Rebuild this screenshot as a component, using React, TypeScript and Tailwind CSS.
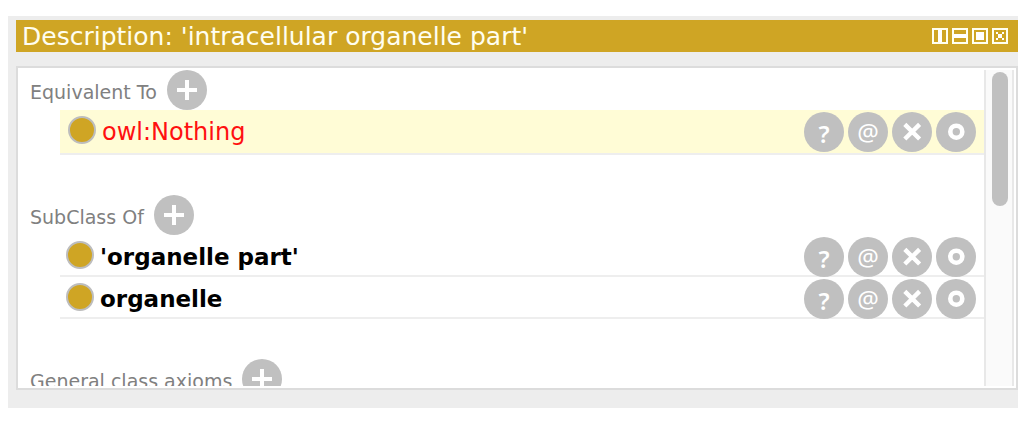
import type { ReactNode } from "react";

function RoundButton({ label, children }: { label: string; children: ReactNode }) {
  return (
    <button
      type="button"
      aria-label={label}
      className="flex size-10 shrink-0 items-center justify-center rounded-full bg-[#c0c0c0] text-white"
    >
      {children}
    </button>
  );
}

function SectionHeader({ title }: { title: string }) {
  return (
    <div className="flex h-10 items-center gap-2.5 pl-3">
      <h2 className="pt-1 text-[19px] leading-6 whitespace-nowrap text-[#808080]">{title}</h2>
      <RoundButton label={`Add ${title}`}>
        <svg viewBox="0 0 40 40" className="size-10" stroke="currentColor" strokeWidth="4">
          <path d="M10 20H30M20 10V30" />
        </svg>
      </RoundButton>
    </div>
  );
}

function RowActions() {
  return (
    <div className="flex gap-1 pr-2">
      <RoundButton label="Explain">
        <span className="pt-1 font-['Noto_Sans',sans-serif] text-2xl leading-6 font-semibold">?</span>
      </RoundButton>
      <RoundButton label="Annotate">
        <span className="font-['Noto_Sans',sans-serif] text-2xl leading-6">@</span>
      </RoundButton>
      <RoundButton label="Remove">
        <svg viewBox="0 0 40 40" className="size-10" stroke="currentColor" strokeWidth="4.4">
          <path d="M12.8 12.4L27.6 27M27.6 12.4L12.8 27" />
        </svg>
      </RoundButton>
      <RoundButton label="Edit">
        <svg viewBox="0 0 40 40" className="size-10" fill="none" stroke="currentColor" strokeWidth="4.6">
          <circle cx="20.3" cy="19.7" r="6" />
        </svg>
      </RoundButton>
    </div>
  );
}

function ClassDot() {
  return <span className="size-7 shrink-0 rounded-full border-2 border-[#bdbdbd] bg-[#cfa524]" />;
}

function InferredRow({ name }: { name: string }) {
  return (
    <li className="flex h-[45px] items-start justify-between bg-[#fffcd6] pt-0.5 pl-2 shadow-[inset_0_-2px_0_#eeeeee]">
      <div className="flex items-start gap-1.5 pt-1">
        <ClassDot />
        <span className="text-2xl leading-8 whitespace-nowrap text-[#ff1010]">{name}</span>
      </div>
      <RowActions />
    </li>
  );
}

function AssertedRow({ name }: { name: string }) {
  return (
    <li className="flex h-[42px] items-start justify-between pt-0.5 pl-1.5 shadow-[inset_0_-2px_0_#eeeeee]">
      <div className="flex items-start gap-1.5 pt-1">
        <ClassDot />
        <span className="text-[23px] leading-8 font-bold whitespace-nowrap text-black">{name}</span>
      </div>
      <RowActions />
    </li>
  );
}

const viewControls = [
  { label: "Split vertically", path: "M1 1H15V15H1Z", fill: "M6 2H10V14H6Z" },
  { label: "Split horizontally", path: "M1 1H15V15H1Z", fill: "M2 6H14V10H2Z" },
  { label: "Float view", path: "M1 1H15V15H1Z", fill: "M4 4H12V12H4Z" },
  {
    label: "Close view",
    path: "M1 1H15V15H1Z",
    fill: "M4 4H6V6H4ZM10 4H12V6H10ZM6 6H10V10H6ZM4 10H6V12H4ZM10 10H12V12H10Z",
  },
];

export default function App() {
  return (
    <div className="h-screen bg-white px-2 pt-4 pb-3.5 font-['DejaVu_Sans',sans-serif]">
      <main className="flex h-full flex-col bg-[#ededed] pt-1 pb-[18px] pl-2">
        <header className="flex h-8 shrink-0 items-center justify-between bg-[#cfa524] pr-2.5 pl-1.5">
          <h1 className="pt-0.5 text-[25px] leading-8 whitespace-nowrap text-[#fffef0]">
            Description: 'intracellular organelle part'
          </h1>
          <div className="flex gap-1">
            {viewControls.map((c) => (
              <button key={c.label} type="button" aria-label={c.label} className="size-4">
                <svg viewBox="0 0 16 16" className="size-4" shapeRendering="crispEdges">
                  <path d={c.path} fill="none" stroke="#fffff0" strokeWidth="2" />
                  <path d={c.fill} fill="#ffffff" />
                </svg>
              </button>
            ))}
          </div>
        </header>

        <section className="mt-3.5 flex min-h-0 flex-1 border-2 border-[#dcdcdc] bg-white py-0.5 pr-0.5">
          <div className="flex min-w-0 flex-1 flex-col gap-10 overflow-hidden">
            <div className="shrink-0">
              <SectionHeader title="Equivalent To" />
              <ul className="pl-[42px]">
                <InferredRow name="owl:Nothing" />
              </ul>
            </div>
            <div className="shrink-0">
              <SectionHeader title="SubClass Of" />
              <ul className="pl-[42px]">
                <AssertedRow name="'organelle part'" />
                <AssertedRow name="organelle" />
              </ul>
            </div>
            <div className="shrink-0">
              <SectionHeader title="General class axioms" />
            </div>
          </div>
          <div className="w-[30px] shrink-0 border-x-2 border-[#e8e8e8] bg-[#fafafa] px-1.5 pt-0.5">
            <div className="h-[134px] w-4 rounded-full bg-[#c0c0c0]" />
          </div>
        </section>
      </main>
    </div>
  );
}
